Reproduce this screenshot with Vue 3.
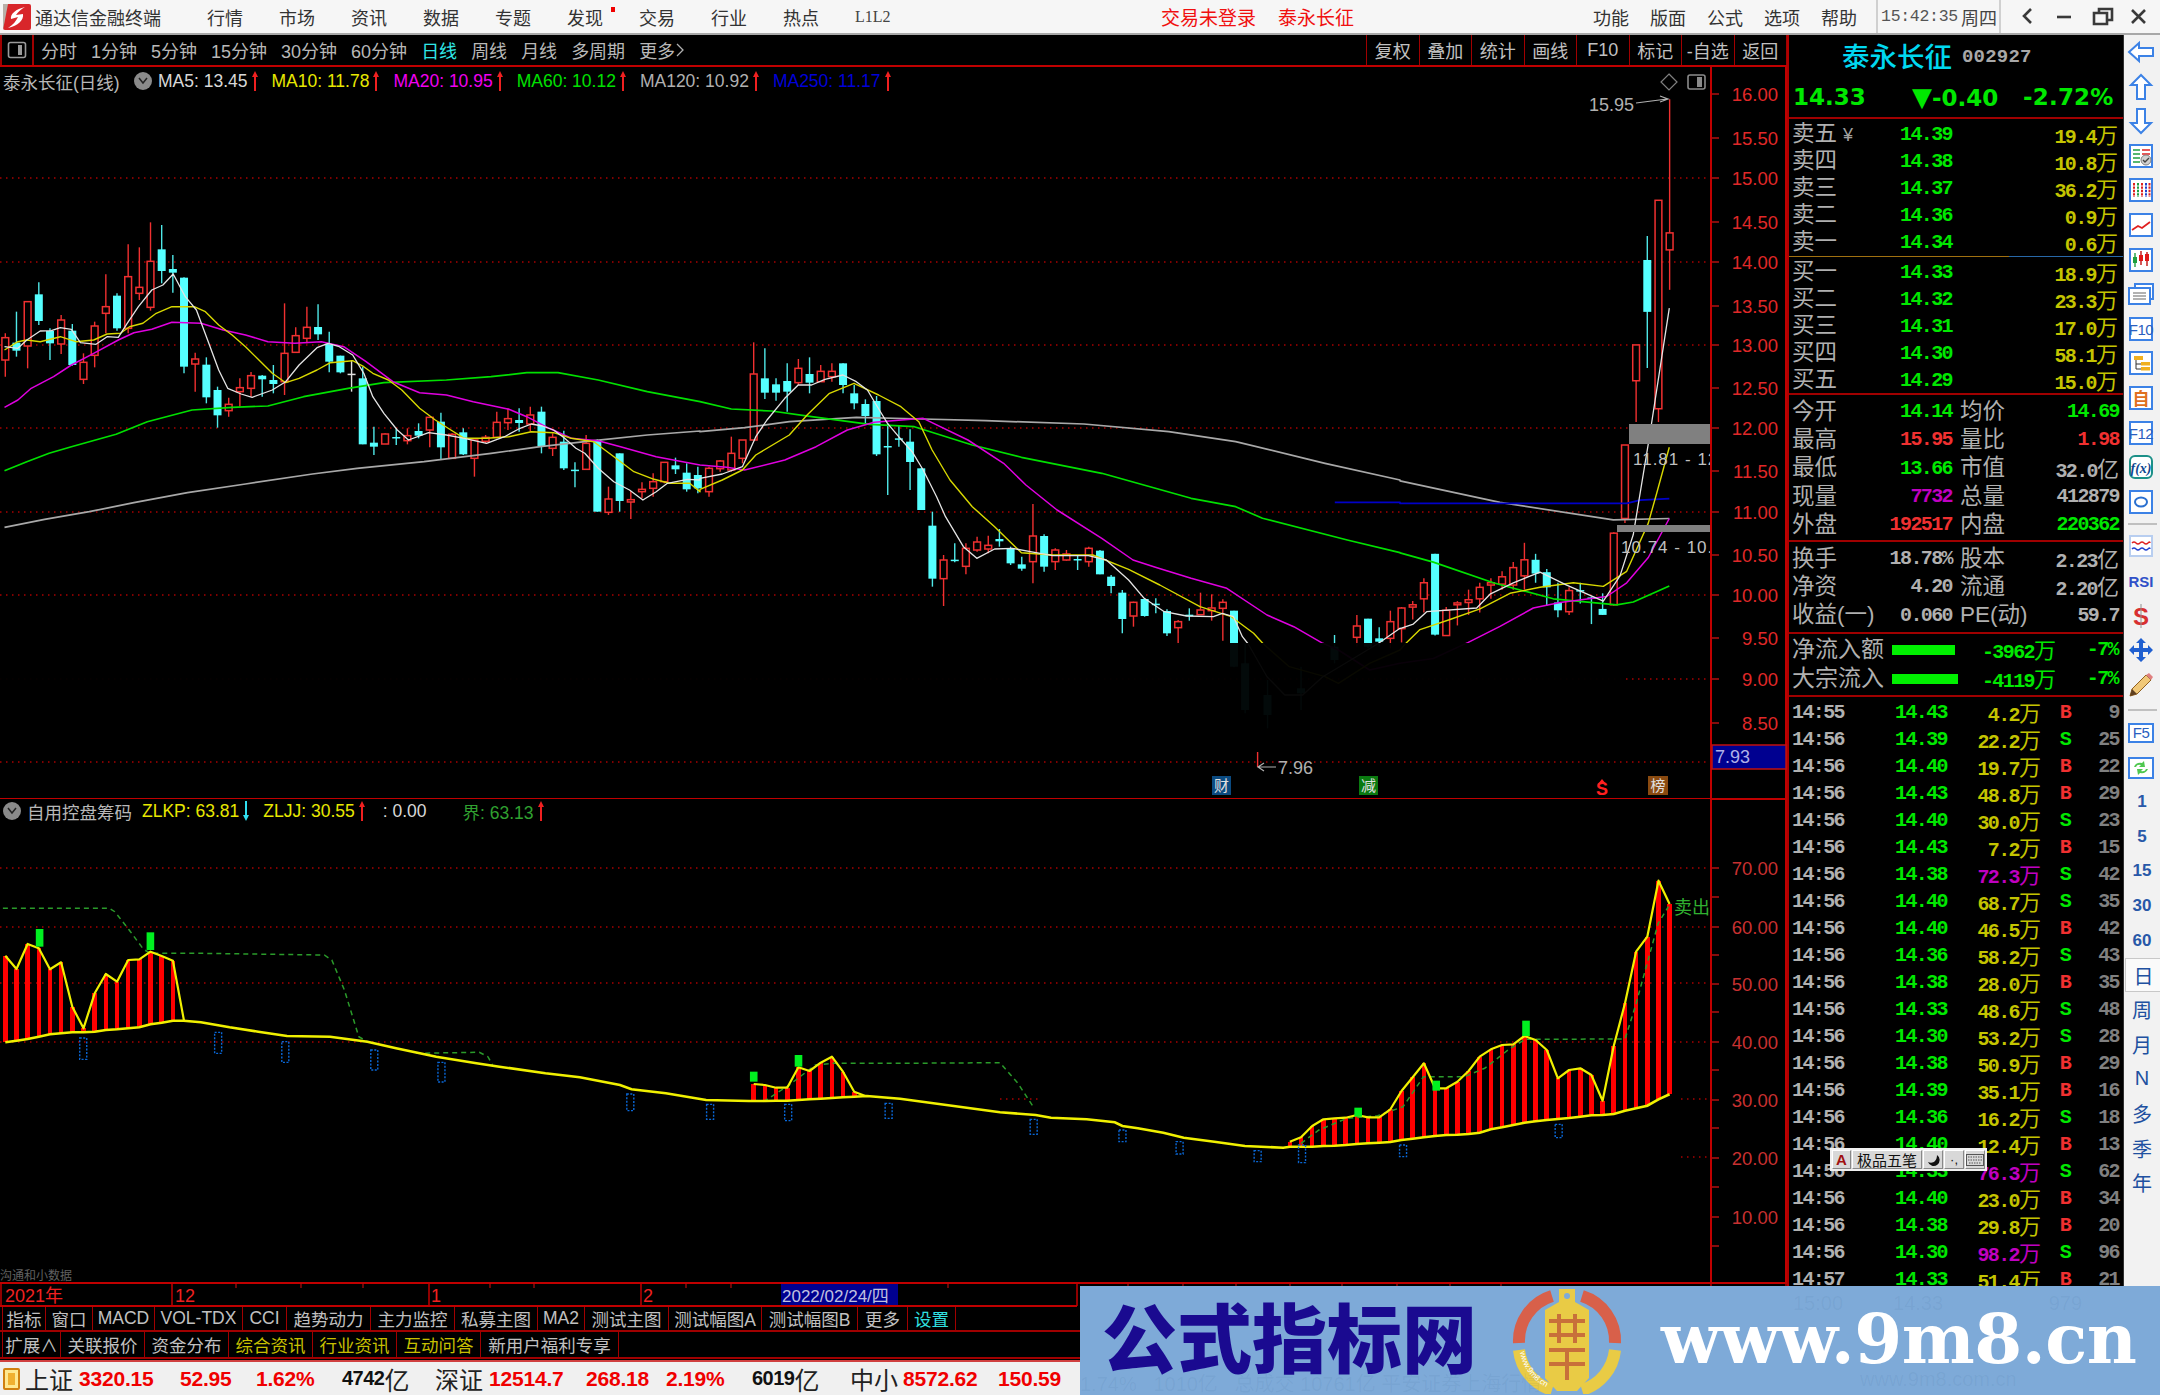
<script setup>
const X = i => 5.3 + 11.17 * i
const A = v => 200 + v / 3
const B = v => 330 + v / 3
const C = v => 80 + v / 2.178

const rawA = [
  [400,413,480,530,'r'],[335,428,452,470,'c'],[305,305,438,505,'r'],[247,283,363,375,'c'],[385,393,430,480,'c'],
  [345,360,432,462,'r'],[372,392,495,497,'c'],[460,487,538,552,'r'],[365,378,466,502,'r'],[223,320,340,400,'r'],
  [280,287,385,392,'c'],[133,230,385,400,'r'],[142,262,280,300,'r'],[67,184,322,332,'r'],[75,148,213,250,'c'],
  [165,207,218,278,'c'],[232,233,500,520,'c'],[458,477,492,575,'r'],[472,494,592,610,'c'],[560,570,646,683,'c'],
  [593,613,632,650,'r'],[535,563,575,620,'r'],[516,527,565,590,'r'],[525,527,538,590,'c'],[495,540,552,580,'c'],
  [310,460,545,585,'r'],[382,407,457,458,'r'],[320,382,415,430,'r'],[313,381,403,420,'c'],[395,432,485,517,'c'],
  [467,467,517,520,'c'],[480,521,524,575,'w'],[500,535,733,733,'c'],[680,728,740,765,'c'],[700,702,732,732,'r'],
  [685,711,713,735,'c'],[685,707,722,733,'r'],[670,693,707,715,'c'],[650,652,690,742,'r'],[638,665,742,780,'c'],
  [700,703,775,775,'r'],[685,697,763,765,'c'],[720,720,775,830,'r'],[705,712,724,730,'r'],[635,667,712,715,'r'],
  [625,656,668,690,'r'],[625,660,669,695,'c'],[620,645,672,695,'r'],[620,635,738,760,'c'],[700,712,745,768,'r'],
  [692,725,805,810,'c'],[787,809,811,862,'c'],[705,730,808,810,'r'],[718,720,935,935,'c'],[860,897,937,945,'r'],
  [760,760,903,935,'c'],[873,899,906,957,'r'],[847,868,875,895,'r'],[820,845,865,890,'r'],[787,787,845,850,'r'],
  [773,796,808,822,'c'],[790,818,868,875,'c'],[800,825,865,880,'c']
]
const rawB = [
  [410,415,485,500,'r'],[390,393,416,425,'r'],[320,370,420,425,'r'],[330,330,385,400,'r'],[37,132,330,330,'r'],
  [55,145,188,207,'c'],[145,163,188,212,'c'],[100,153,185,245,'c'],[87,115,158,165,'r'],[82,132,158,190,'c'],
  [105,124,155,155,'r'],[100,124,140,155,'r'],[100,100,165,190,'c'],[165,190,220,238,'c'],[208,222,258,283,'c'],
  [198,213,373,378,'c'],[280,348,351,495,'c'],[285,325,328,350,'c'],[298,335,396,480,'c'],[415,415,540,540,'c'],
  [545,587,746,770,'c'],[675,690,746,828,'r'],[640,689,692,697,'c'],[640,655,709,733,'r'],[620,636,660,665,'r'],
  [617,646,657,670,'r'],[597,627,634,650,'c'],[650,655,700,705,'c'],[680,703,716,722,'c'],[522,618,695,760,'r'],
  [613,618,710,725,'c'],[655,660,695,720,'r'],[660,672,690,692,'r'],[675,687,690,720,'c'],[650,655,695,710,'r'],
  [660,662,733,733,'c'],[735,740,768,790,'c'],[780,788,867,910,'c'],[815,817,858,890,'r'],[805,807,858,860,'c'],
  [805,821,824,850,'c'],[838,843,910,918,'c'],[870,875,893,945,'r'],[835,854,857,872,'c'],[788,840,854,855,'r'],
  [793,834,842,872,'r'],[808,817,835,932,'r'],[842,842,1010,1012,'c'],[940,1000,1140,1150,'c']
]
const extras = [
  [113,1050,1095,1155,1195,'c'],[116,1010,1075,1090,1140,'c'],[119,915,950,990,1000,'c'],
  [121,855,888,922,950,'r'],[122,866,866,950,955,'c'],[123,892,925,935,950,'c'],[124,842,875,925,955,'r']
]
const rawC = [
  [1148,1150,1195,1225,'r'],[1135,1143,1148,1175,'r'],[1085,1095,1130,1160,'r'],[1032,1032,1208,1210,'c'],[1148,1155,1210,1210,'r'],
  [1135,1139,1143,1188,'r'],[1110,1132,1138,1165,'r'],[1095,1105,1130,1160,'r'],[1085,1095,1100,1130,'r'],[1070,1082,1098,1110,'r'],
  [1050,1062,1100,1110,'r'],[1008,1045,1080,1110,'r'],[1032,1045,1075,1095,'c'],[1065,1072,1105,1145,'c'],[1095,1138,1155,1170,'c'],
  [1105,1112,1158,1165,'r'],[1095,1111,1114,1140,'c'],[1125,1127,1130,1185,'c'],[1118,1152,1165,1165,'c'],[985,987,1143,1145,'r'],
  [795,795,955,965,'r'],[577,577,655,745,'r'],[340,392,505,627,'c'],[262,262,716,745,'r'],[42,333,370,457,'r']
]
const mk = (i, r, f) => ({
  key: i, x: X(i), wt: f(r[0]), wb: f(r[3]), bt: f(r[1]), bh: Math.max(1.5, f(r[2]) - f(r[1])), k: r[4]
})
const candles = [
  ...rawA.map((r, i) => mk(i, r, A)),
  ...rawB.map((r, i) => mk(i + 63, r, B)),
  ...extras.map(r => mk(r[0], r.slice(1), B)),
  ...rawC.map((r, i) => mk(i + 125, r, C))
]

const seg = (pts, ox, sx, oy, sy) => pts.map(p => (ox + p[0] / sx).toFixed(1) + ',' + (oy + p[1] / sy).toFixed(1)).join(' ')
const line3 = (a, b, c) => [seg(a, 0, 2.24, 200, 3), seg(b, 700, 2.24, 330, 3), seg(c, 1400, 3, 80, 2.178)].join(' ')

const maLines = [
  { c: '#a8a8a8', w: 1.7, p: line3(
    [[10,982],[100,958],[200,935],[300,908],[420,878],[550,852],[700,822],[800,805],[950,785],[1100,760],[1210,740],[1330,722],[1450,705],[1568,693]],
    [[0,305],[100,293],[200,275],[350,262],[500,267],[640,272],[860,282],[1050,305],[1200,335],[1400,400],[1568,450]],
    [[0,873],[300,920],[640,958],[808,955]]) },
  { c: '#0000c8', w: 1.7, p: seg([[1422,517],[1568,517]], 700, 2.24, 330, 3) + ' ' + seg([[0,922],[330,922],[680,922],[720,915],[808,912]], 1400, 3, 80, 2.178) },
  { c: '#00e000', w: 1.7, p: line3(
    [[10,812],[60,785],[110,760],[160,740],[260,703],[330,665],[430,630],[520,622],[600,618],[680,590],[780,565],[860,548],[1000,540],[1100,530],[1180,518],[1250,518],[1340,540],[1450,575],[1568,605]],
    [[0,215],[70,237],[160,243],[250,260],[380,283],[480,290],[610,345],[720,382],[900,430],[1100,505],[1200,530],[1260,565],[1450,630],[1568,668]],
    [[0,1030],[100,1050],[280,1095],[460,1130],[650,1143],[700,1137],[808,1102]]) },
  { c: '#e000e0', w: 1.5, p: line3(
    [[10,622],[40,600],[70,565],[120,530],[160,495],[210,460],[265,420],[300,398],[340,388],[385,367],[450,370],[500,390],[550,405],[600,425],[660,430],[720,425],[770,440],[820,485],[880,545],[940,578],[1000,585],[1060,605],[1140,628],[1180,650],[1230,685],[1280,715],[1340,722],[1390,740],[1470,770],[1568,795]],
    [[0,405],[60,412],[100,420],[190,390],[260,350],[330,300],[390,277],[500,265],[600,330],[680,400],[730,465],[800,540],[900,625],[970,690],[1020,712],[1100,745],[1180,775],[1270,855],[1330,890],[1395,940],[1430,960],[1500,1020],[1568,1000]],
    [[100,1260],[205,1225],[300,1190],[400,1150],[480,1138],[620,1125],[680,1095],[745,1040],[808,955]]) },
  { c: '#d8d800', w: 1.4, p: line3(
    [[10,450],[40,425],[60,420],[90,425],[135,410],[170,425],[210,420],[240,402],[270,400],[290,380],[320,370],[350,340],[385,320],[435,320],[460,335],[490,375],[520,405],[550,440],[580,480],[610,520],[640,548],[670,535],[710,510],[740,488],[790,482],[815,500],[835,520],[870,540],[900,570],[940,625],[975,660],[1010,690],[1040,715],[1090,715],[1140,710],[1190,695],[1240,698],[1280,715],[1330,725],[1370,765],[1420,815],[1465,838],[1500,850],[1545,850],[1568,875]],
    [[0,478],[50,450],[95,420],[125,375],[200,315],[240,255],[290,190],[345,160],[400,195],[450,230],[490,275],[520,360],[560,450],[610,530],[660,590],[720,668],[790,675],[880,675],[960,718],[1030,765],[1120,830],[1190,860],[1240,910],[1262,942],[1320,1010],[1400,1040],[1430,1060],[1500,1000],[1568,960]],
    [[20,1225],[60,1197],[150,1175],[240,1152],[330,1118],[420,1105],[520,1095],[610,1103],[680,1070],[745,965],[770,900],[808,800]]) },
  { c: '#e4e4e4', w: 1.3, p: line3(
    [[10,440],[40,445],[60,420],[90,393],[115,392],[135,383],[160,388],[180,428],[215,433],[240,410],[265,412],[285,370],[310,320],[340,270],[365,255],[388,222],[415,290],[440,330],[465,420],[490,510],[510,565],[540,582],[565,592],[610,570],[640,545],[670,495],[710,443],[735,430],[760,440],[790,465],[815,520],[835,590],[860,640],[890,690],[915,720],[960,698],[1000,705],[1040,715],[1090,730],[1130,710],[1165,685],[1190,672],[1215,678],[1240,690],[1265,715],[1290,745],[1310,760],[1340,805],[1375,845],[1410,870],[1440,900],[1470,875],[1495,850],[1540,838],[1568,840]],
    [[0,445],[50,432],[95,410],[125,320],[150,270],[190,205],[220,165],[250,165],[280,148],[320,135],[350,155],[375,180],[395,225],[420,280],[445,320],[475,365],[500,420],[530,500],[550,560],[590,650],[620,685],[660,657],[700,655],[740,665],[790,677],[870,677],[910,690],[960,750],[995,805],[1040,845],[1090,858],[1150,860],[1170,850],[1195,860],[1215,920],[1228,942],[1270,1040],[1310,1095],[1350,1095],[1395,1040],[1520,940],[1568,895]],
    [[0,1195],[40,1185],[80,1158],[230,1150],[270,1120],[340,1095],[420,1072],[500,1100],[610,1135],[660,1080],[700,990],[750,770],[808,497]]) }
]

const gridMain = [178, 262, 345, 428, 512, 595, 679, 762]
const priceLabels = [[94,'16.00'],[138,'15.50'],[178,'15.00'],[222,'14.50'],[262,'14.00'],[306,'13.50'],[345,'13.00'],[388,'12.50'],[428,'12.00'],[471,'11.50'],[512,'11.00'],[555,'10.50'],[595,'10.00'],[638,'9.50'],[679,'9.00'],[723,'8.50']]

const I = v => 790 + v / 3
const bar1 = [[497,757],[537,752],[462,747],[475,740],[538,733],[517,730],[650,727],[715,727],[610,725],[552,720],[575,718],[510,715],[508,712],[485,703],[498,698],[512,692]]
const bar2 = [[882,933],[885,933],[893,932],[893,932],[832,930],[843,928],[818,926],[800,924],[845,922],[905,920]]
const bar3 = [[1055,1070],[1042,1070],[1008,1070],[988,1068],[985,1067],[983,1065],[975,1062],[982,1060],[982,1058],[958,1056],[903,1050],[862,1046],[820,1042],[895,1038],[895,1035],[875,1034],[843,1032],[800,1028],[778,1018],[765,1012],[763,1005],[738,998],[750,994],[780,990],[865,987],[840,984],[835,980],[855,976],[932,975],[767,972],[640,962],[485,955],[440,947],[272,928],[342,913]]
const bars = [
  ...bar1.map((b, i) => ({ i, t: b[0], b: b[1] })),
  ...bar2.map((b, i) => ({ i: i + 67, t: b[0], b: b[1] })),
  ...bar3.map((b, i) => ({ i: i + 115, t: b[0], b: b[1] }))
].map(b => ({ key: b.i, x: X(b.i), y: I(b.t), h: I(b.b) - I(b.t) }))

const poly = (arr, start) => arr.map((b, i) => X(start + i).toFixed(1) + ',' + I(b[0]).toFixed(1)).join(' ')
const kpLines = [
  poly([...bar1, [692,692]], 0),
  poly([...bar2, [918,918]], 67),
  poly(bar3, 115)
]
const jjLine = [
  ...bar1.map((b, i) => X(i).toFixed(1) + ',' + I(b[1]).toFixed(1)),
  seg([[320,692],[350,697],[385,707],[400,712],[450,725],[500,738],[575,740],[640,755],[690,775],[760,800],[830,820],[870,830],[950,850],[1010,862],[1080,885],[1100,898],[1160,910],[1230,930],[1305,933]], 0, 1.742, 790, 3),
  ...bar2.map((b, i) => X(i + 67).toFixed(1) + ',' + I(b[1]).toFixed(1)),
  seg([[1510,918],[1568,926]], 0, 1.742, 790, 3),
  seg([[0,967],[70,975],[100,983],[170,988],[225,997],[240,1008],[270,1015],[320,1028],[360,1043],[420,1055],[480,1068],[555,1073]], 1000, 1.96, 790, 3),
  ...bar3.map((b, i) => X(i + 115).toFixed(1) + ',' + I(b[1]).toFixed(1))
].join(' ')

const dash = [
  seg([[5,355],[190,355],[200,365],[225,420],[250,478],[262,490],[350,490],[565,495],[578,510],[600,600],[625,740],[640,755]], 0, 1.742, 790, 3),
  seg([[725,790],[835,787],[850,800],[858,825]], 0, 1.742, 790, 3),
  seg([[1330,935],[1375,885],[1420,825],[1450,820],[1568,820]], 0, 1.742, 790, 3) + ' ' + seg([[0,818],[35,880],[65,950]], 1000, 1.96, 790, 3),
  seg([[590,1060],[625,1020],[680,985],[740,977],[790,950],[830,860],[910,860],[950,835],[1000,775],[1030,748],[1225,747],[1245,650],[1290,400],[1310,350]], 1000, 1.96, 790, 3)
]
const s7 = (zx, t, b) => ({ x: zx / 1.742, y: I(t), h: I(b) - I(t) })
const s8 = (zx, t, b) => ({ x: 1000 + zx / 1.96, y: I(t), h: I(b) - I(t) })
const greenMarks = [s7(69,417,470), s7(262,427,480), s7(1313,845,875), s7(1391,795,830), s8(702,953,980), s8(855,872,902), s8(1031,692,738)]
const blueMarks = [s7(145,744,808), s7(380,727,790), s7(497,755,817), s7(652,780,840), s7(769,817,876), s7(1098,912,962), s7(1237,943,988), s7(1373,943,992), s7(1548,940,985), s8(66,988,1033), s8(240,1020,1055), s8(352,1055,1092), s8(505,1082,1115), s8(592,1065,1118), s8(790,1065,1100), s8(1095,1003,1043)]
const indLabels = [[868,'70.00'],[927,'60.00'],[984,'50.00'],[1042,'40.00'],[1100,'30.00'],[1158,'20.00'],[1217,'10.00']]
const indTicks = [868,897,927,955,984,1012,1042,1070,1100,1128,1158,1187,1217,1246]

const menus = ['行情','市场','资讯','数据','专题','发现','交易','行业','热点','L1L2']
const periods = [
  { t: '分时' },{ t: '1分钟' },{ t: '5分钟' },{ t: '15分钟' },{ t: '30分钟' },{ t: '60分钟' },
  { t: '日线', on: true },{ t: '周线' },{ t: '月线' },{ t: '多周期' }
]
const tools = ['复权','叠加','统计','画线','F10','标记','-自选','返回']
const mas = [
  { t: 'MA5: 13.45', c: 'c-white' },{ t: 'MA10: 11.78', c: 'c-yellow' },{ t: 'MA20: 10.95', c: 'c-mag' },
  { t: 'MA60: 10.12', c: 'c-green' },{ t: 'MA120: 10.92', c: 'c-gray' },{ t: 'MA250: 11.17', c: 'c-blue' }
]
const tabs1 = [['指标',44],['窗口',47],['MACD',62],['VOL-TDX',88],['CCI',44],['趋势动力',84],['主力监控',84],['私募主图',83],['MA2',47],['测试主图',84],['测试幅图A',93],['测试幅图B',96],['更多',50],['设置',48,'cyan']]
const tabs2 = [['扩展∧',59],['关联报价',84],['资金分布',84],['综合资讯',84,'gold'],['行业资讯',84,'gold'],['互动问答',84,'gold'],['新用户福利专享',138]]

const asks = [['卖五','14.39','19.4',true],['卖四','14.38','10.8'],['卖三','14.37','36.2'],['卖二','14.36','0.9'],['卖一','14.34','0.6']]
const bids = [['买一','14.33','18.9'],['买二','14.32','23.3'],['买三','14.31','17.0'],['买四','14.30','58.1'],['买五','14.29','15.0']]
const stats1 = [
  ['今开','14.14','c-g','均价','14.69','c-g'],['最高','15.95','c-r','量比','1.98','c-r'],['最低','13.66','c-g','市值','32.0','c-n','亿'],
  ['现量','7732','c-p','总量','412879','c-n'],['外盘','192517','c-r','内盘','220362','c-g']
]
const stats2 = [['换手','18.78%','c-n','股本','2.23','c-n','亿'],['净资','4.20','c-n','流通','2.20','c-n','亿'],['收益(一)','0.060','c-n','PE(动)','59.7','c-n']]
const flows = [['净流入额',63,'-3962','-7%'],['大宗流入',66,'-4119','-7%']]
const ticks = [
  ['14:55','14.43','4.2','B','9'],['14:56','14.39','22.2','S','25'],['14:56','14.40','19.7','B','22'],['14:56','14.43','48.8','B','29'],
  ['14:56','14.40','30.0','S','23'],['14:56','14.43','7.2','B','15'],['14:56','14.38','72.3','S','42'],['14:56','14.40','68.7','S','35'],
  ['14:56','14.40','46.5','B','42'],['14:56','14.36','58.2','S','43'],['14:56','14.38','28.0','B','35'],['14:56','14.33','48.6','S','48'],
  ['14:56','14.30','53.2','S','28'],['14:56','14.38','50.9','B','29'],['14:56','14.39','35.1','B','16'],['14:56','14.36','16.2','S','18'],
  ['14:56','14.40','12.4','B','13'],['14:56','14.33','76.3','S','62'],['14:56','14.40','23.0','B','34'],['14:56','14.38','29.8','B','20'],
  ['14:56','14.30','98.2','S','96'],['14:57','14.33','51.4','B','21']
]
const sideText = ['1','5','15','30','60']
const sideCjk = ['周','月','N','多','季','年']

const st = [
  ['上证',54,'s-k'],['3320.15',101,'s-r'],['52.95',76,'s-r'],['1.62%',86,'s-r'],['4742',93,'s-b','亿'],
  ['深证',54,'s-k'],['12514.7',97,'s-r'],['268.18',80,'s-r'],['2.19%',86,'s-r'],['6019',98,'s-b','亿'],
  ['中小',53,'s-k'],['8572.62',95,'s-r'],['150.59',70,'s-r']
]
const xTicks = [236,301,363,490,534,686,731,948,1128,1183,1236,1290,1342,1397,1450,1501]
</script>

<template>
  <div class="root">
    <header class="titlebar">
      <svg class="logo" width="28" height="26" viewBox="0 0 28 26">
        <rect width="28" height="26" rx="2" fill="#d8262a"/>
        <path d="M0 0h5L0 26z" fill="#b8b0a8"/>
        <path d="M22 3 C13 5 7 10 8 15 L15 13 C13 17 10 21 5 24 C15 22 21 16 20 10 L13 11 C15 8 18 5 22 3z" fill="#fff"/>
      </svg>
      <span class="appname">通达信金融终端</span>
      <nav class="menus">
        <span v-for="m in menus" :key="m" class="menu" :class="{ thin: m === 'L1L2' }">{{ m }}<i v-if="m === '发现'" class="dot"></i></span>
      </nav>
      <span class="alert first">交易未登录</span>
      <span class="alert second">泰永长征</span>
      <nav class="rmenus"><span>功能</span><span>版面</span><span>公式</span><span>选项</span><span>帮助</span></nav>
      <div class="clock"><span class="time">15:42:35</span><span class="week">周四</span></div>
      <div class="winbtns">
        <svg width="150" height="34" viewBox="0 0 150 34" fill="none" stroke="#3a3a3a" stroke-width="2.6">
          <path d="M18 9 l-7 7 l7 7"/>
          <path d="M44 17 h14"/>
          <path d="M81 13 h13 v11 h-13z M86 13 v-4 h13 v11 h-5"/>
          <path d="M119 10 l13 13 M132 10 l-13 13"/>
        </svg>
      </div>
    </header>

    <div class="workspace">
      <div class="left">
        <div class="toolbar">
          <div class="tool-icon"><svg width="20" height="18" viewBox="0 0 20 18"><rect x="1.5" y="1.5" width="17" height="15" rx="2" fill="none" stroke="#9a9a9a" stroke-width="1.6"/><rect x="11" y="4" width="4" height="10" fill="#9a9a9a"/></svg></div>
          <span v-for="p in periods" :key="p.t" class="period" :class="{ on: p.on }">{{ p.t }}</span>
          <span class="period">更多<svg width="8" height="16" viewBox="0 0 8 16" fill="none" stroke="#b0b0b0" stroke-width="1.3"><path d="M1 2l6 6-6 6"/></svg></span>
          <div class="tools">
            <span v-for="t in tools" :key="t" class="tool">{{ t }}</span>
          </div>
        </div>

        <section class="chart">
          <svg class="plot" width="1787" height="731" viewBox="0 67 1787 731">
            <line v-for="y in gridMain" :key="y" x1="0" :x2="1711" :y1="y" :y2="y" class="grid"/>
            <g v-for="c in candles" :key="c.key">
              <line :x1="c.x" :x2="c.x" :y1="c.wt" :y2="c.wb" :stroke="c.k === 'r' ? '#f03030' : c.k === 'c' ? '#4fe8e8' : '#e0e0e0'" stroke-width="1.4"/>
              <rect v-if="c.k === 'r'" :x="c.x - 3.4" :y="c.bt" width="6.8" :height="c.bh" fill="#000" stroke="#f03030" stroke-width="1.5"/>
              <rect v-else :x="c.x - 4" :y="c.bt" width="8" :height="c.bh" :fill="c.k === 'c' ? '#55ffff' : '#e0e0e0'"/>
            </g>
            <polyline v-for="(l, n) in maLines" :key="n" :points="l.p" fill="none" :stroke="l.c" :stroke-width="l.w" stroke-linejoin="round"/>
            <rect x="0" y="643" width="1622" height="108" fill="#000" opacity=".96"/>

            <rect x="1629" y="424" width="82" height="20" fill="#808080"/>
            <rect x="1617" y="525" width="94" height="7" fill="#808080"/>
            <svg x="1600" y="445" width="110" height="120" viewBox="1600 445 110 120">
              <text x="1633" y="465" class="pl-lab">11.81 - 12.00</text>
              <text x="1621" y="553" class="pl-lab">10.74 - 10.85</text>
            </svg>

            <text x="1589" y="111" class="hilo">15.95</text>
            <path d="M1636 103 L1667 99 M1660 96 L1668 99 L1660 102" fill="none" stroke="#b0b0b0" stroke-width="1.2"/>
            <line x1="1257.6" x2="1257.6" y1="752" y2="767" stroke="#f03030" stroke-width="1.4"/>
            <path d="M1276 767 L1258 767 M1264 763 L1258 767 L1264 771" fill="none" stroke="#b0b0b0" stroke-width="1.2"/>
            <text x="1278" y="774" class="hilo">7.96</text>

            <rect x="1212" y="776" width="19" height="19" fill="#0b4a80"/>
            <text x="1221.5" y="791" class="tag">财</text>
            <rect x="1359" y="776" width="19" height="19" fill="#0a7a10"/>
            <text x="1368.5" y="791" class="tag">减</text>
            <text x="1602" y="795" class="dollar">S</text>
            <path d="M1598 784 L1602 779 L1606 784z" fill="#ff2020"/>
            <rect x="1648" y="776" width="20" height="19" fill="#8a4a10"/>
            <text x="1658" y="791" class="tag">榜</text>

            <path d="M1669 74 L1677 82 L1669 90 L1661 82z" fill="none" stroke="#808080" stroke-width="1.2"/>
            <rect x="1688" y="75" width="17" height="14" rx="2" fill="none" stroke="#8a8a8a" stroke-width="1.6"/>
            <rect x="1697" y="77" width="5" height="10" fill="#8a8a8a"/>

            <line x1="1711" x2="1711" y1="67" y2="798" class="axis"/>
            <line x1="1786" x2="1786" y1="67" y2="798" class="axis"/>
            <g v-for="p in priceLabels" :key="p[1]">
              <line x1="1712" x2="1719" :y1="p[0]" :y2="p[0]" stroke="#b01010" stroke-width="1.5"/>
              <text x="1778" :y="p[0] + 7" class="price-lab">{{ p[1] }}</text>
            </g>
            <rect x="1712" y="745" width="74" height="24" fill="#000090" stroke="#c01010" stroke-width="1.5"/>
            <text x="1715" y="763" class="low-lab">7.93</text>
          </svg>
          <div class="legend">
            <span class="lg-name">泰永长征(日线)</span>
            <span class="round"><svg width="10" height="8" viewBox="0 0 10 8" fill="none" stroke="#222" stroke-width="1.5"><path d="M1 1l4 5 4-5"/></svg></span>
            <span v-for="m in mas" :key="m.t" class="lg-item" :class="m.c">{{ m.t }}<svg class="arrow" width="8" height="22" viewBox="0 0 8 22"><path d="M4 1L7 7H5V21H3V7H1z" fill="#f02020"/></svg></span>
          </div>
        </section>

        <section class="indicator">
          <svg class="plot" width="1787" height="484" viewBox="0 798 1787 484">
            <line v-for="y in [868,927,983,1042]" :key="y" x1="0" x2="1711" :y1="y" :y2="y" class="grid"/>
            <line x1="1000" x2="1040" y1="1099" y2="1099" class="grid"/>
            <line x1="1681" x2="1711" y1="1099" y2="1099" class="grid"/>
            <line x1="1681" x2="1711" y1="1157" y2="1157" class="grid"/>
            <rect v-for="b in bars" :key="b.key" :x="b.x - 2.3" :y="b.y" width="4.6" :height="b.h" fill="#ff0000" shape-rendering="crispEdges"/>
            <polyline v-for="(d, n) in dash" :key="n" :points="d" fill="none" stroke="#2a9a2a" stroke-width="1.5" stroke-dasharray="5 4"/>
            <polyline :points="jjLine" fill="none" stroke="#f0f000" stroke-width="2.6"/>
            <polyline v-for="(l, n) in kpLines" :key="n" :points="l" fill="none" stroke="#f0f000" stroke-width="2.2" stroke-linejoin="round"/>
            <rect v-for="(g, n) in greenMarks" :key="n" :x="g.x - 3.8" :y="g.y" width="7.6" :height="g.h" fill="#00f020"/>
            <rect v-for="(g, n) in blueMarks" :key="n" :x="g.x - 3.5" :y="g.y" width="7" :height="g.h" fill="none" stroke="#0a68d8" stroke-width="1.4" stroke-dasharray="2 1.5"/>
            <text x="1674" y="914" class="sell">卖出</text>
            <line x1="1711" x2="1711" y1="798" y2="1282" class="axis"/>
            <line x1="1786" x2="1786" y1="798" y2="1282" class="axis"/>
            <line x1="1711" x2="1786" y1="799" y2="799" class="axis"/>
            <line x1="0" x2="1787" y1="798" y2="798" class="axis"/>
            <line v-for="y in indTicks" :key="y" x1="1712" x2="1719" :y1="y" :y2="y" stroke="#b01010" stroke-width="1.5"/>
            <text v-for="l in indLabels" :key="l[1]" x="1778" :y="l[0] + 7" class="price-lab dim">{{ l[1] }}</text>
            <text x="0" y="1280" class="ghost">沟通和小数据</text>
          </svg>
          <div class="legend ind-legend">
            <span class="round"><svg width="10" height="8" viewBox="0 0 10 8" fill="none" stroke="#222" stroke-width="1.5"><path d="M1 1l4 5 4-5"/></svg></span>
            <span class="lg-name ind-name">自用控盘筹码</span>
            <span class="lg-item c-yellow">ZLKP: 63.81<svg class="arrow" width="8" height="22" viewBox="0 0 8 22"><path d="M3 1H5V15H7L4 21L1 15H3z" fill="#30e0f0"/></svg></span>
            <span class="lg-item c-yellow">ZLJJ: 30.55<svg class="arrow" width="8" height="22" viewBox="0 0 8 22"><path d="M4 1L7 7H5V21H3V7H1z" fill="#f02020"/></svg></span>
            <span class="lg-item c-white ind-zero">: 0.00</span>
            <span class="lg-item c-dash">界: 63.13<svg class="arrow" width="8" height="22" viewBox="0 0 8 22"><path d="M4 1L7 7H5V21H3V7H1z" fill="#f02020"/></svg></span>
          </div>
        </section>

        <svg class="xaxis" width="1787" height="25" viewBox="0 1282 1787 25">
          <line x1="0" x2="1787" y1="1283" y2="1283" class="axis"/>
          <line x1="0" x2="1077" y1="1306" y2="1306" class="axis"/>
          <line v-for="x in [1,172,429,641,1077,1711,1786]" :key="x" :x1="x" :x2="x" y1="1283" y2="1306" class="axis thin"/>
          <line v-for="x in xTicks" :key="x" :x1="x" :x2="x" y1="1283" y2="1288" stroke="#b01010" stroke-width="1.2"/>
          <text x="5" y="1302" class="ax-lab">2021年</text>
          <text x="175" y="1302" class="ax-lab">12</text>
          <text x="431" y="1302" class="ax-lab">1</text>
          <text x="643" y="1302" class="ax-lab">2</text>
          <rect x="781" y="1284" width="117" height="21" fill="#000090"/>
          <text x="782" y="1302" class="ax-date">2022/02/24/四</text>
        </svg>

        <div class="tabs">
          <span v-for="t in tabs1" :key="t[0]" class="tab" :class="t[2]" :style="{ width: t[1] + 'px' }">{{ t[0] }}</span>
        </div>
        <div class="tabs second">
          <span v-for="t in tabs2" :key="t[0]" class="tab" :class="t[2]" :style="{ width: t[1] + 'px' }">{{ t[0] }}</span>
        </div>
      </div>

      <aside class="panel">
        <div class="p-title"><span class="p-name">泰永长征</span><span class="p-code">002927</span></div>
        <div class="p-price sect"><span class="b1">14.33</span><span class="b2"><i class="tri">▼</i>-0.40</span><span class="b3">-2.72%</span></div>
        <div class="book">
          <div v-for="r in asks" :key="r[0]" class="q-row">
            <span class="q-lab">{{ r[0] }}<em v-if="r[3]" class="yen">¥</em></span>
            <span class="dg c-g q-p">{{ r[1] }}</span>
            <span class="dg c-v q-v">{{ r[2] }}<i class="wan">万</i></span>
          </div>
        </div>
        <div class="midline"></div>
        <div class="book sect">
          <div v-for="r in bids" :key="r[0]" class="q-row">
            <span class="q-lab">{{ r[0] }}</span>
            <span class="dg c-g q-p">{{ r[1] }}</span>
            <span class="dg c-v q-v">{{ r[2] }}<i class="wan">万</i></span>
          </div>
        </div>
        <div class="stats sect">
          <div v-for="r in stats1" :key="r[0]" class="s-row">
            <span class="s-cell"><span class="q-lab">{{ r[0] }}</span><span class="dg" :class="r[2]">{{ r[1] }}</span></span>
            <span class="s-cell"><span class="q-lab">{{ r[3] }}</span><span class="dg" :class="r[5]">{{ r[4] }}<i v-if="r[6]" class="wan">{{ r[6] }}</i></span></span>
          </div>
        </div>
        <div class="stats two sect">
          <div v-for="r in stats2" :key="r[0]" class="s-row">
            <span class="s-cell"><span class="q-lab">{{ r[0] }}</span><span class="dg" :class="r[2]">{{ r[1] }}</span></span>
            <span class="s-cell"><span class="q-lab">{{ r[3] }}</span><span class="dg" :class="r[5]">{{ r[4] }}<i v-if="r[6]" class="wan">{{ r[6] }}</i></span></span>
          </div>
        </div>
        <div class="flows sect">
          <div v-for="f in flows" :key="f[0]" class="f-row">
            <span class="q-lab f-lab">{{ f[0] }}</span>
            <span class="f-track"><i class="f-bar" :style="{ width: f[1] + 'px' }"></i></span>
            <span class="dg c-g f-v">{{ f[2] }}<i class="wan">万</i></span>
            <span class="dg c-g f-pct">{{ f[3] }}</span>
          </div>
        </div>
        <div class="ticks">
          <div v-for="(t, n) in ticks" :key="n" class="t-row">
            <span class="dg c-n">{{ t[0] }}</span>
            <span class="dg c-g t-r">{{ t[1] }}</span>
            <span class="dg t-r" :class="+t[2] > 70 ? 'c-p' : 'c-v'">{{ t[2] }}<i class="wan">万</i></span>
            <span class="dg t-c" :class="t[3] === 'B' ? 'c-r' : 'c-g'">{{ t[3] }}</span>
            <span class="dg t-r c-d">{{ t[4] }}</span>
          </div>
        </div>
      </aside>

      <aside class="side">
        <svg class="si" viewBox="0 0 30 30"><path d="M3 15 L13 6 V11 H27 V19 H13 V24z" fill="#fff" stroke="#3c82e6" stroke-width="2"/></svg>
        <svg class="si" viewBox="0 0 30 30"><path d="M15 3 L25 13 H19 V27 H11 V13 H5z" fill="#fff" stroke="#3c82e6" stroke-width="2"/></svg>
        <svg class="si" viewBox="0 0 30 30"><path d="M15 27 L25 17 H19 V3 H11 V17 H5z" fill="#fff" stroke="#3c82e6" stroke-width="2"/></svg>
        <svg class="si" viewBox="0 0 30 30"><rect x="4" y="4" width="22" height="22" fill="#fff" stroke="#3c82e6" stroke-width="2"/><path d="M7 9h7M7 13h7M7 17h7M7 21h7" stroke="#20a040" stroke-width="1.6"/><path d="M16 9h8M16 13h8" stroke="#e02020" stroke-width="1.6"/><circle cx="20" cy="19" r="5" fill="#d0d0d0" stroke="#808080"/><path d="M17 19l2 2 4-4" stroke="#444" fill="none" stroke-width="1.4"/></svg>
        <svg class="si" viewBox="0 0 30 30"><rect x="4" y="4" width="22" height="22" fill="#fff" stroke="#3c82e6" stroke-width="2"/><g stroke-width="2"><path d="M8 8v14" stroke="#e02020" stroke-dasharray="2.4 1"/><path d="M12 8v14" stroke="#20a040" stroke-dasharray="2.4 1"/><path d="M16 8v14" stroke="#e02020" stroke-dasharray="2.4 1"/><path d="M20 8v14" stroke="#2040d0" stroke-dasharray="2.4 1"/><path d="M23.500 8v14" stroke="#e02020" stroke-dasharray="2.4 1"/></g></svg>
        <svg class="si" viewBox="0 0 30 30"><rect x="4" y="4" width="22" height="22" fill="#fff" stroke="#3c82e6" stroke-width="2"/><path d="M6 20l6-4 4 2 8-6" fill="none" stroke="#e02020" stroke-width="1.8"/></svg>
        <svg class="si" viewBox="0 0 30 30"><rect x="4" y="4" width="22" height="22" fill="#fff" stroke="#3c82e6" stroke-width="2"/><g stroke-width="1.4"><path d="M9 8v14" stroke="#20a040"/><path d="M15 6v14" stroke="#c01010"/><path d="M21 7v14" stroke="#c01010"/></g><rect x="7" y="12" width="4" height="6" fill="#20a040"/><rect x="13" y="10" width="4" height="6" fill="#e01818"/><rect x="19" y="9" width="4" height="7" fill="#e01818"/></svg>
        <svg class="si" viewBox="0 0 30 30"><rect x="9" y="5" width="18" height="15" fill="#fff" stroke="#3c82e6" stroke-width="2"/><rect x="3" y="9" width="21" height="16" fill="#fff" stroke="#3c82e6" stroke-width="2"/><path d="M7 14h13M7 17h13M7 20h13" stroke="#666" stroke-width="1.2"/></svg>
        <svg class="si" viewBox="0 0 30 30"><rect x="4" y="4" width="22" height="22" fill="#fff" stroke="#3c82e6" stroke-width="2"/><text x="15" y="21" class="si-t">F10</text></svg>
        <svg class="si" viewBox="0 0 30 30"><rect x="4" y="4" width="22" height="22" fill="#fff" stroke="#3c82e6" stroke-width="2"/><path d="M10 12v9h5M10 16h5" fill="none" stroke="#333" stroke-width="1"/><rect x="8" y="8" width="9" height="4" fill="#f0b020"/><rect x="15" y="14" width="9" height="3.500" fill="#f0b020"/><rect x="15" y="19" width="9" height="3.500" fill="#f0b020"/></svg>
        <svg class="si" viewBox="0 0 30 30"><rect x="4" y="4" width="22" height="22" fill="#fff" stroke="#3c82e6" stroke-width="2"/><text x="15" y="21.500" class="si-c orange">自</text></svg>
        <svg class="si" viewBox="0 0 30 30"><rect x="4" y="4" width="22" height="22" fill="#fff" stroke="#3c82e6" stroke-width="2"/><text x="15" y="21" class="si-t">F12</text></svg>
        <svg class="si" viewBox="0 0 30 30"><rect x="4" y="4" width="22" height="22" rx="5" fill="#fff" stroke="#1c9088" stroke-width="2"/><text x="15" y="21" class="si-fx">f(x)</text></svg>
        <svg class="si" viewBox="0 0 30 30"><rect x="4" y="4" width="22" height="22" fill="#fff" stroke="#3c82e6" stroke-width="2"/><ellipse cx="15" cy="15" rx="6" ry="4.500" fill="none" stroke="#2a70d0" stroke-width="2"/></svg>
        <div class="sep"></div>
        <svg class="si" viewBox="0 0 30 30"><rect x="4" y="5" width="22" height="20" fill="#fff" stroke="#b8cef0" stroke-width="2"/><path d="M6 12q2-2 4 0t4 0 4 0 4 0 2 0" fill="none" stroke="#e02020" stroke-width="1.4"/><path d="M6 18q2-2 4 0t4 0 4 0 4 0 2 0" fill="none" stroke="#2040d0" stroke-width="1.4"/></svg>
        <svg class="si" viewBox="0 0 30 30"><text x="15" y="21" class="si-rsi">RSI</text></svg>
        <svg class="si" viewBox="0 0 30 30"><text x="15" y="24" class="si-d">S</text><path d="M15 3v24" stroke="#909090" stroke-width="1"/></svg>
        <svg class="si" viewBox="0 0 30 30"><path d="M15 3l5 5h-3v5h5v-3l5 5-5 5v-3h-5v5h3l-5 5-5-5h3v-5H8v3l-5-5 5-5v3h5V8h-3z" fill="#1f5fd0"/></svg>
        <svg class="si" viewBox="0 0 30 30"><path d="M4 26l2-7L20 5l5 5L11 24z" fill="#f0c878" stroke="#906020"/><path d="M20 5l5 5 2-3-4-4z" fill="#e08080"/><path d="M4 26l2-7 5 5z" fill="#604020"/></svg>
        <div class="sep low"></div>
        <svg class="si" viewBox="0 0 30 30"><rect x="3" y="6" width="24" height="18" fill="#fff" stroke="#3c82e6" stroke-width="2"/><text x="15" y="20" class="si-t">F5</text></svg>
        <svg class="si refresh" viewBox="0 0 30 30"><rect x="3" y="5" width="24" height="20" fill="#fff" stroke="#3c82e6" stroke-width="2"/><path d="M8 14q2-5 8-4l2-2 1 6-6 0 2-2q-4-1-5 2zM22 16q-2 5-8 4l-2 2-1-6 6 0-2 2q4 1 5-2z" fill="#50c850"/></svg>
        <span v-for="t in sideText" :key="t" class="sn">{{ t }}</span>
        <span class="sn cj selected">日</span>
        <span v-for="t in sideCjk" :key="t" class="sn cj">{{ t }}</span>
      </aside>
    </div>

    <footer class="status">
      <span class="s-ic"></span>
      <span v-for="(s, n) in st" :key="n" class="st" :class="s[2]" :style="{ width: s[1] + 'px' }">{{ s[0] }}<i v-if="s[3]" class="st-yi">{{ s[3] }}</i></span>
    </footer>

    <div class="banner">
      <span class="bn-title">公式指标网</span>
      <svg class="bn-logo" width="110" height="106" viewBox="0 0 110 106">
        <path d="M7 55 A47 47 0 0 1 40 8" fill="none" stroke="#d8604a" stroke-width="12"/>
        <path d="M70 8 A47 47 0 0 1 103 55" fill="none" stroke="#d8604a" stroke-width="12"/>
        <path d="M7 62 A47 47 0 0 0 40 102" fill="none" stroke="#e9cb45" stroke-width="12" />
        <path d="M70 102 A47 47 0 0 0 103 62" fill="none" stroke="#e9cb45" stroke-width="12"/>
        <path d="M47 1 H63 V14 L77 22 V90 L65 103 H45 L33 90 V22 L47 14z" fill="#e9cb45"/>
        <circle cx="55" cy="8" r="3" fill="#7eaad8"/>
        <path d="M37 33 H73 M37 47 H73 M37 62 H73 M37 76 H73 M47 26 V55 M63 26 V55 M55 62 V92" stroke="#c8703a" stroke-width="4" fill="none"/>
        <path id="bnArc" d="M8 64 A47 47 0 0 0 42 102" fill="none"/>
        <text class="bn-arc"><textPath href="#bnArc">www.9m8.cn</textPath></text>
      </svg>
      <span class="bn-url">www.9m8.cn</span>
      <span class="bn-ghost g1">15:00 &nbsp; &nbsp; &nbsp; &nbsp; 14.33 &nbsp; &nbsp; &nbsp; &nbsp; &nbsp; &nbsp; &nbsp; &nbsp; &nbsp; 979</span>
      <span class="bn-ghost g2">1.74% &nbsp; 1010亿 &nbsp; 总成交 10761亿 平安证券上海行情</span>
      <span class="bn-ghost g3">www.9m8.com.cn</span>
    </div>

    <div class="ime">
      <span class="ime-a">A</span>
      <span class="ime-n">极品五笔</span>
      <span class="ime-b"><svg width="14" height="14" viewBox="0 0 14 14"><path d="M11 2a6 6 0 1 1-9 7c4 2 9 0 9-7z" fill="#111"/></svg></span>
      <span class="ime-b dots">·,</span>
      <span class="ime-b"><svg width="18" height="12" viewBox="0 0 18 12"><rect x=".5" y=".5" width="17" height="11" fill="#d8d8d8" stroke="#555"/><path d="M2 3h14M2 6h14M3 9h12" stroke="#555" stroke-dasharray="1.500 1"/></svg></span>
    </div>
  </div>
</template>

<style scoped>
.root {
  position: relative; width: 2160px; height: 1395px; overflow: hidden; background: #000;
  display: flex; flex-direction: column;
  font-family: "Liberation Sans", "Noto Sans CJK SC", sans-serif; color: #c0c0c0;
}
i, em { font-style: normal; }
.titlebar {
  height: 35px; flex: none; box-sizing: border-box; border-bottom: 2px solid #a8a8a8; background: #f6f6f6;
  display: flex; align-items: center; color: #333; font-size: 18px;
}
.logo { margin-left: 3px; flex: none; }
.appname { margin-left: 4px; width: 172px; flex: none; }
.menus { display: flex; gap: 36px; flex: none; align-items: center; }
.menu { position: relative; width: 36px; white-space: nowrap; }
.menu.thin { font-size: 16px; color: #444; font-family: "Liberation Serif", serif; }
.dot { position: absolute; left: 44px; top: 3px; width: 4px; height: 5px; background: #f00000; }
.alert { color: #f01010; font-size: 19px; flex: none; }
.alert.first { margin-left: 270px; }
.alert.second { margin-left: 22px; }
.rmenus { display: flex; margin-left: 239px; gap: 21px; flex: none; }
.rmenus span { width: 36px; white-space: nowrap; }
.clock {
  margin-left: 19px; height: 33px; width: 125px; box-sizing: border-box; display: flex; align-items: center; flex: none;
  border-left: 2px solid #d0d0d0; border-right: 2px solid #d0d0d0; padding-left: 3px; color: #444; white-space: nowrap;
}
.time { font-family: "Liberation Mono", monospace; font-size: 16.500px; letter-spacing: -.3px; color: #555; width: 80px; flex: none; }
.week { flex: none; width: 36px; }
.winbtns { flex: none; margin-left: 12px; height: 34px; }

.workspace { flex: none; height: 1325px; display: flex; background: #000; }
.left { width: 1787px; flex: none; display: flex; flex-direction: column; }
.toolbar {
  height: 32px; flex: none; box-sizing: border-box; display: flex; align-items: center; border-bottom: 2px solid #c00000;
  font-size: 18px; color: #b8b8b8;
}
.tool-icon {
  width: 34px; height: 30px; box-sizing: border-box; border-left: 2px solid #a00000; border-right: 2px solid #a00000;
  display: flex; align-items: center; justify-content: center; margin-right: 7px; flex: none;
}
.period { margin-right: 14px; white-space: nowrap; display: flex; align-items: center; gap: 1px; }
.period.on { color: #30e8e8; }
.tools { margin-left: auto; display: flex; height: 30px; }
.tool { width: 52.500px; display: flex; align-items: center; justify-content: center; border-left: 1.500px solid #a00000; box-sizing: border-box; white-space: nowrap; color: #c0c0c0; }
.tool:last-child { width: 53.500px; border-right: 1.500px solid #a00000; }

.chart { position: relative; height: 731px; flex: none; }
.indicator { position: relative; height: 484px; flex: none; }
.plot { display: block; }
.grid { stroke: #a80000; stroke-width: 1.5; stroke-dasharray: 1.5 4.500; }
.axis { stroke: #c00000; stroke-width: 2; }
.axis.thin { stroke-width: 1.5; }
.price-lab { font-size: 18.500px; fill: #e02828; text-anchor: end; }
.price-lab.dim { fill: #c83030; }
.low-lab { font-size: 18px; fill: #b0b0e8; }
.hilo { font-size: 18px; fill: #b0b0b0; }
.pl-lab { font-size: 17px; fill: #c0c0c0; letter-spacing: 1px; }
.tag { font-size: 15px; fill: #e0e0e0; text-anchor: middle; }
.dollar { font-size: 18px; font-weight: bold; fill: #ff2020; text-anchor: middle; }
.sell { font-size: 18px; fill: #30b030; }
.ghost { font-size: 12px; fill: #606060; }
.legend {
  position: absolute; left: 3px; top: 1px; height: 26px; display: flex; align-items: center; font-size: 17.500px; white-space: nowrap;
}
.lg-name { color: #b8b8b8; font-size: 17.500px; width: 131px; }
.round { width: 18px; height: 18px; border-radius: 50%; background: #8a8a8a; display: inline-flex; align-items: center; justify-content: center; margin-right: 6px; }
.lg-item { display: inline-flex; align-items: center; margin-right: 13px; }
.arrow { margin-left: 3px; }
.c-white { color: #d8d8d8; } .c-yellow { color: #e8e800; } .c-mag { color: #f000f0; } .c-green { color: #00e000; }
.c-gray { color: #b0b0b0; } .c-blue { color: #0000d8; } .c-dash { color: #30a030; }
.ind-legend { top: 0; left: 3px; }
.ind-name { width: 115px; }
.ind-zero { margin-left: 4px; margin-right: 36px; }

.xaxis { display: block; flex: none; }
.ax-lab { font-size: 18px; fill: #f02020; }
.ax-date { font-size: 17px; fill: #c0c0e0; }
.tabs { height: 25px; flex: none; display: flex; box-sizing: border-box; border-bottom: 2px solid #a00000; padding-left: 2px; font-size: 17.500px; }
.tabs.second { height: 27px; }
.tab { box-sizing: border-box; border-right: 1.500px solid #a00000; display: flex; align-items: center; justify-content: center; white-space: nowrap; color: #c0c0c0; flex: none; overflow: hidden; }
.tab:first-child { border-left: 1.500px solid #a00000; }
.tab.cyan { color: #30e0e0; }
.tab.gold { color: #c8c000; }

.panel { width: 337px; flex: none; box-sizing: border-box; border-left: 2px solid #b00000; border-right: 1px solid #303030; overflow: hidden; }
.sect { border-bottom: 2px solid #a00000; box-sizing: border-box; }
.p-title { height: 39px; display: flex; align-items: center; padding-left: 53px; }
.p-name { font-size: 27.500px; color: #00d8f0; font-weight: 500; width: 120px; white-space: nowrap; }
.p-code { font-family: "Liberation Mono", monospace; font-weight: bold; font-size: 19px; color: #a8a8a8; letter-spacing: .2px; position: relative; top: 2px; }
.p-price { height: 45px; display: flex; align-items: center; font-family: "DejaVu Sans", sans-serif; font-weight: bold; font-size: 23px; color: #00e800; white-space: nowrap; padding-top: 3px; }
.b1 { margin-left: 4px; width: 119px; }
.b2 { width: 111px; }
.tri { font-size: 26px; }
.b3 { font-size: 23px; letter-spacing: .2px; }
.book { padding-top: 2px; }
.q-row { height: 27px; display: grid; grid-template-columns: 108px 52px 166px; align-items: center; padding-left: 3px; }
.q-lab { font-size: 22.500px; color: #b0b0b0; white-space: nowrap; line-height: 1; }
.yen { font-size: 18px; margin-left: 6px; color: #a0a0a0; }
.dg { font-family: "Liberation Mono", monospace; font-weight: bold; font-size: 20px; letter-spacing: -1.600px; white-space: nowrap; line-height: 1; }
.q-p { text-align: right; }
.q-v { text-align: right; }
.wan { font-family: "Noto Sans CJK SC", sans-serif; font-weight: 400; font-size: 22px; letter-spacing: 0; }
.c-g { color: #00e800; } .c-r { color: #f03030; } .c-n { color: #b0b0b0; } .c-p { color: #c000c0; } .c-v { color: #c4c400; } .c-d { color: #808080; }
.midline { height: 1.500px; margin-top: -.500px; background: linear-gradient(90deg, #a07010 0 220px, #2868a8 220px); }
.book.sect { height: 138px; }
.stats { padding-top: 3px; height: 147px; }
.s-row { height: 28.300px; display: grid; grid-template-columns: 160px 159px; column-gap: 8px; padding-left: 3px; align-items: center; }
.stats.two { padding-top: 3px; height: 92px; }
.s-cell { display: flex; align-items: center; justify-content: space-between; }
.flows { height: 63px; padding-top: 1px; }
.f-row { height: 29px; display: flex; align-items: center; padding-left: 3px; }
.f-lab { width: 100px; flex: none; font-size: 23px; }
.f-track { width: 89px; flex: none; }
.f-bar { display: block; height: 10px; background: #00f000; }
.f-v { width: 75px; flex: none; text-align: right; }
.f-pct { width: 62px; flex: none; text-align: right; }
.ticks { padding-top: 2px; }
.t-row { height: 27px; display: grid; grid-template-columns: 60px 95px 94px 48px 30px; align-items: center; padding-left: 3px; }
.t-r { text-align: right; }
.t-c { text-align: center; }

.side { flex: 1; background: #f2f2f2; display: flex; flex-direction: column; align-items: center; padding-top: 1px; }
.si { width: 30px; height: 30px; margin-top: 4.600px; flex: none; margin-left: -2px; }
.si:first-child { margin-top: 1px; }
.si-t { font-size: 15px; fill: #2a60c0; text-anchor: middle; letter-spacing: -.5px; }
.si-c { font-size: 17px; text-anchor: middle; }
.si-c.orange { fill: #e07020; font-weight: bold; }
.si-fx { font-size: 14px; font-style: italic; fill: #104890; text-anchor: middle; font-family: "Liberation Serif", serif; font-weight: bold; }
.si-rsi { font-size: 15px; font-weight: bold; fill: #3050c8; text-anchor: middle; }
.si-d { font-size: 24px; font-weight: bold; fill: #d83030; text-anchor: middle; }
.sep { width: 29px; height: 2px; background: #c0c0c0; margin: 6px 0 2px; flex: none; }
.sep.low { margin: 9px 0 3px; }
.refresh { margin-bottom: 2px; }
.sn { height: 34.600px; display: flex; align-items: center; justify-content: center; width: 100%; font-size: 17px; color: #2858a8; font-weight: bold; flex: none; }
.sn.cj { font-weight: 400; font-size: 20px; color: #2050a0; }
.selected { background: #fafafa; border: 1px solid #c8c8c8; border-right: 0; box-sizing: border-box; margin-left: 2px; }

.status { height: 35px; flex: none; background: #f0f0f0; display: flex; align-items: center; border-top: 2px solid #d04040; box-sizing: border-box; }
.s-ic { width: 17px; height: 22px; margin: 0 5px 0 3px; flex: none; background: #f0b030; border: 2px solid #d08010; box-sizing: border-box; border-radius: 2px; box-shadow: inset 0 0 0 3px #ffe890; }
.st { flex: none; white-space: nowrap; display: inline-flex; align-items: center; }
.s-k { font-size: 24px; color: #222; }
.s-r { font-size: 21px; color: #f00000; font-weight: bold; letter-spacing: -.2px; }
.s-b { font-size: 20px; color: #111; font-weight: bold; letter-spacing: -.5px; }
.st-yi { font-size: 25px; font-weight: 400; color: #222; font-family: "Noto Sans CJK SC", sans-serif; }

.banner { position: absolute; left: 1080px; top: 1286px; width: 1080px; height: 109px; background: #7eaad8; display: flex; align-items: center; overflow: hidden; }
.bn-title { margin-left: 22px; font-size: 75px; line-height: 1; font-weight: 900; color: #1a0a90; white-space: nowrap; width: 410px; flex: none; position: relative; top: 1px; }
.bn-logo { flex: none; margin-left: 0; }
.bn-arc { font-size: 8px; fill: #fff; }
.bn-url { margin-left: 39px; font-family: "DejaVu Serif", serif; font-weight: bold; font-size: 69px; color: #fff; white-space: nowrap; letter-spacing: -.5px; line-height: 1; position: relative; top: -2px; }
.bn-ghost { position: absolute; color: rgba(40, 80, 130, .07); font-size: 20px; white-space: nowrap; }
.g1 { left: 713px; top: 6px; }
.g2 { left: 0; top: 82px; }
.g3 { left: 780px; top: 82px; }

.ime { position: absolute; left: 1830px; top: 1148px; width: 157px; height: 23px; box-sizing: border-box; background: #d8d8d8; border: 2px solid #f0f0f0; display: flex; align-items: stretch; gap: 1px; color: #111; }
.ime span { border: 1px solid #888; border-top-color: #fff; border-left-color: #fff; box-sizing: border-box; display: flex; align-items: center; justify-content: center; }
.ime-a { width: 19px; color: #a01010; font-weight: bold; font-size: 15px; }
.ime-n { width: 71px; font-size: 15px; white-space: nowrap; }
.ime-b { width: 20px; font-size: 13px; }
</style>

<style>
html, body { margin: 0; padding: 0; background: #000; }
</style>
